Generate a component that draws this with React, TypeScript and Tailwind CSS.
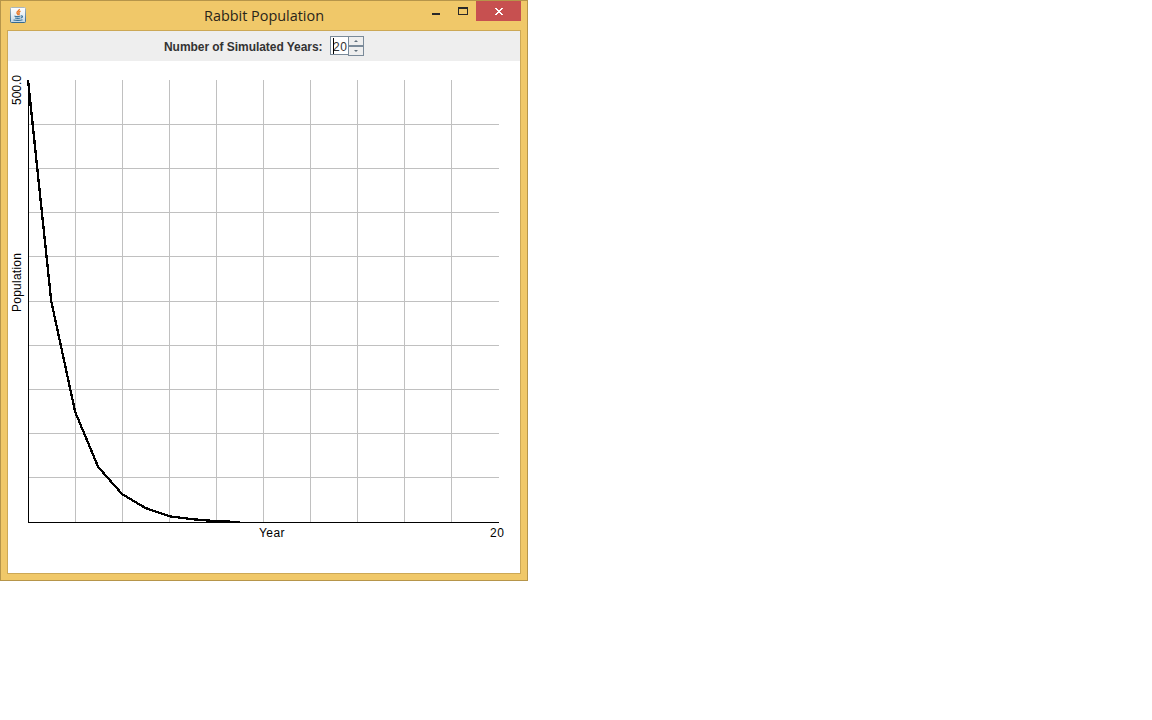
import React from "react";

const YEARS = 20;
const START = 500;
const WIDTH = 470;
const HEIGHT = 442;
const LEFT = 20;
const TOP = 19;

const curve = [
  [20, 19], [43.2, 240], [67.2, 351], [90.2, 406], [114.2, 433.2],
  [137.5, 447], [161.5, 455.3], [184.5, 458.2], [208.5, 460.2], [232, 461],
];

function JavaIcon() {
  return (
    <svg width="16" height="16" viewBox="0 0 16 16" fill="none">
      <defs>
        <linearGradient id="tile" x1="0" y1="0" x2="0" y2="1">
          <stop offset="0" stopColor="#ffffff" />
          <stop offset="0.5" stopColor="#e8eff4" />
          <stop offset="1" stopColor="#c0d4e2" />
        </linearGradient>
        <linearGradient id="rim" x1="0" y1="0" x2="0" y2="1">
          <stop offset="0" stopColor="#a9b7bf" />
          <stop offset="1" stopColor="#346a91" />
        </linearGradient>
      </defs>
      <rect x="0.5" y="0.5" width="15" height="15" rx="1" fill="url(#tile)" stroke="url(#rim)" />
      <path d="M9.300 2c.5 1.800-2.800 2.300-2.300 4 .2.700 1 1 1 2.200M10.500 4.200c-2 1-2 1.500-1.300 2.500.3.500-.2 1-.6 1.400" stroke="#ea7a28" strokeWidth="1.400" />
      <path d="M4.500 9c1 .5 4.500.5 6 0M5 11c1.500.4 4 .4 5.500 0M11 9c2-.6 2 1.400 0 2M3.500 13c2 .6 7 .6 9-.3" stroke="#39749c" strokeWidth="1.100" />
    </svg>
  );
}

function TitleBar() {
  return (
    <header className="flex h-[29px] items-start">
      <div className="ml-[9px] mt-[6px] h-4 w-4"><JavaIcon /></div>
      <h1 className="ml-[178px] mt-[4px] w-[124px] whitespace-nowrap font-['Open_Sans',sans-serif] text-[15px] leading-[21px] text-[#292419]">
        <svg width="124" height="21" className="block overflow-visible">
          <text x="0" y="16" textLength="120" lengthAdjust="spacingAndGlyphs" fill="#292419">Rabbit Population</text>
        </svg>
      </h1>
      <div className="ml-auto flex">
        <button className="mr-[18px] mt-[12px] h-[2px] w-2 bg-[#292929]" aria-label="Minimize" />
        <button className="mr-[8px] mt-[6px] h-2 w-[10px] border border-t-2 border-[#292929]" aria-label="Maximize" />
        <button className="mr-[6px] flex h-5 w-[45px] justify-center bg-[#c75050] pt-[7px]" aria-label="Close">
          <svg width="8" height="7" viewBox="0 0 8 7" shapeRendering="crispEdges" fill="#fff">
            <path d="M0 0h2v1h1v1h2v-1h1v-1h2v1h-1v1h-1v1h-1v1h1v1h1v1h1v1h-2v-1h-1v-1h-2v1h-1v1h-2v-1h1v-1h1v-1h1v-1h-1v-1h-1v-1h-1z" />
          </svg>
        </button>
      </div>
    </header>
  );
}

function YearsSpinner() {
  return (
    <div className="mt-[5px] flex h-5">
      <div className="h-[19px] w-[18px] border-y border-l border-[#7a8a99] bg-white">
        <svg width="17" height="17" className="block overflow-visible">
          <text x="2" y="14" textLength="14" fill="#333" className="font-['Liberation_Sans',sans-serif] text-[12px]">{YEARS}</text>
          <path d="M2.500 1v16" stroke="#000" shapeRendering="crispEdges" />
        </svg>
      </div>
      <div className="flex w-4 flex-col">
        <button className="flex h-[10px] items-center justify-center border border-[#7a8a99] bg-[#eee]" aria-label="Increase">
          <svg width="4" height="2" viewBox="0 0 4 2"><path d="M2 0l2 2H0z" fill="#5f6e7b" /></svg>
        </button>
        <button className="flex h-[10px] items-center justify-center border border-[#7a8a99] bg-[#eee]" aria-label="Decrease">
          <svg width="4" height="2" viewBox="0 0 4 2"><path d="M0 0h4L2 2z" fill="#5f6e7b" /></svg>
        </button>
      </div>
    </div>
  );
}

function PopulationChart() {
  const divisions = [1, 2, 3, 4, 5, 6, 7, 8, 9];
  return (
    <svg width="512" height="512" className="block bg-white font-['Liberation_Sans',sans-serif] text-[12px]">
      <g stroke="#c0c0c0" shapeRendering="crispEdges">
        {divisions.map((i) => (
          <path key={i} d={`M${LEFT + i * 47 + 0.5} ${TOP}v${HEIGHT}M${LEFT} ${TOP + Math.floor(i * 44.2) + 0.5}h${WIDTH + 1}`} />
        ))}
      </g>
      <path d={`M20.500 ${TOP}V461.500H491`} stroke="#000" fill="none" shapeRendering="crispEdges" />
      <polyline points={curve.map((p) => p.join(",")).join(" ")} fill="none" stroke="#000" strokeWidth="2.3" shapeRendering="crispEdges" />
      <g fill="#000">
        <text transform="translate(13 44) rotate(-90)" textLength="30">{START.toFixed(1)}</text>
        <text transform="translate(13 251) rotate(-90)" textLength="59">Population</text>
        <text x="251" y="476" textLength="25.500">Year</text>
        <text x="482" y="476" textLength="14">{YEARS}</text>
      </g>
    </svg>
  );
}

export default function App() {
  return (
    <div className="min-h-screen bg-white">
      <div className="h-[581px] w-[528px] border border-[#b6954a] bg-[#f0c869]">
        <TitleBar />
        <main className="ml-[6px] h-[544px] w-[514px] border border-[#cca856] bg-white">
          <div className="flex h-[30px] bg-[#eee] pl-[156px]">
            <svg width="166" height="30" className="block font-['Liberation_Sans',sans-serif] text-[12px] font-bold">
              <text x="0" y="20" textLength="158.500" fill="#333">Number of Simulated Years:</text>
            </svg>
            <YearsSpinner />
          </div>
          <PopulationChart />
        </main>
      </div>
    </div>
  );
}
